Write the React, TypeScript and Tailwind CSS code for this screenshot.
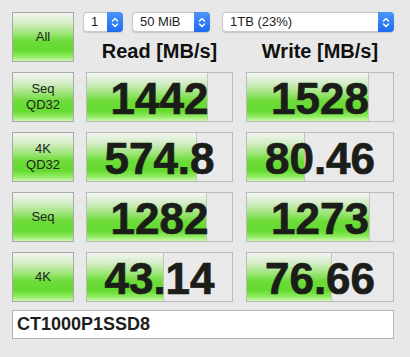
import React from 'react';

const green =
  'bg-[linear-gradient(to_bottom,#f3f5f1_0%,#d2ecc4_22%,#9ee57a_42%,#6edc3a_58%,#64da30_78%,#8cea5c_90%,#cdfaae_100%)]';

interface Row {
  label: string[];
  read: string;
  readFill: number;
  write: string;
  writeFill: number;
}

const rows: Row[] = [
  { label: ['Seq', 'QD32'], read: '1442', readFill: 122, write: '1528', writeFill: 123 },
  { label: ['4K', 'QD32'], read: '574.8', readFill: 111, write: '80.46', writeFill: 59 },
  { label: ['Seq'], read: '1282', readFill: 121, write: '1273', writeFill: 124 },
  { label: ['4K'], read: '43.14', readFill: 78, write: '76.66', writeFill: 86 },
];

function Chevrons() {
  return (
    <svg width="8" height="11" viewBox="0 0 8 11" fill="none" stroke="white" strokeWidth="1.4" strokeLinecap="round" strokeLinejoin="round">
      <path d="M1.5 4 L4 1.5 L6.5 4" />
      <path d="M1.5 7 L4 9.5 L6.5 7" />
    </svg>
  );
}

function Select({ value, width }: { value: string; width: string }) {
  return (
    <div className={`flex h-5 ${width} rounded-[4px] bg-white border border-[#c9c9c9] shadow-[0_0.5px_1px_rgba(0,0,0,0.15)]`}>
      <span className="flex-1 pl-[7px] text-[13px] leading-[18px] text-[#1e1e1e]">{value}</span>
      <div className="flex w-4 items-center justify-center rounded-r-[4px] bg-[linear-gradient(to_bottom,#4b95f9,#1f6bf1)] -my-px -mr-px">
        <Chevrons />
      </div>
    </div>
  );
}

function LabelButton({ lines }: { lines: string[] }) {
  return (
    <div className={`flex h-[50px] w-[62px] shrink-0 flex-col items-center justify-center border border-[#a8a8a8] ${green} text-[13px] leading-4 text-[#222]`}>
      {lines.map((l) => (
        <span key={l}>{l}</span>
      ))}
    </div>
  );
}

function Cell({ value, fill, width }: { value: string; fill: number; width: string }) {
  return (
    <div className={`relative h-[50px] ${width} shrink-0 border border-[#bababa] bg-[#e9e9e9]`}>
      <div className={`absolute left-0 top-0 bottom-0 ${green} border-r border-[#c4c4c4]`} style={{ width: fill - 1 }} />
      <div className="relative h-full pt-[4px] text-center text-[44px] font-bold leading-[44px] text-[#1b1d18] [-webkit-text-stroke:0.7px_#1b1d18]">
        {value}
      </div>
    </div>
  );
}

export default function App() {
  return (
    <div className="h-[357px] w-[410px] bg-[#e8e8e8] pl-3 pt-3 font-['Liberation_Sans',Arial,sans-serif]">
      <div className="flex flex-col gap-[10px]">
        <div className="flex h-[50px]">
          <LabelButton lines={['All']} />
          <div className="ml-[9px] flex w-[311px] flex-col">
            <div className="flex">
              <Select value="1" width="w-10" />
              <div className="ml-[9px]">
                <Select value="50 MiB" width="w-[78px]" />
              </div>
              <div className="ml-3">
                <Select value="1TB (23%)" width="w-[172px]" />
              </div>
            </div>
            <div className="mt-2 flex text-[20px] font-bold leading-[22px] text-[#111]">
              <div className="ml-[3px] w-[147px] text-center">Read [MB/s]</div>
              <div className="ml-[13px] w-[148px] text-center">Write [MB/s]</div>
            </div>
          </div>
        </div>
        {rows.map((r) => (
          <div key={r.read} className="flex">
            <LabelButton lines={r.label} />
            <div className="ml-3">
              <Cell value={r.read} fill={r.readFill} width="w-[147px]" />
            </div>
            <div className="ml-[13px]">
              <Cell value={r.write} fill={r.writeFill} width="w-[148px]" />
            </div>
          </div>
        ))}
      </div>
      <div className="mt-2 flex h-[29px] w-[382px] items-center border border-[#b4b4b4] bg-white pl-1 text-[18px] font-bold text-[#1e1e1e]">
        CT1000P1SSD8
      </div>
    </div>
  );
}
